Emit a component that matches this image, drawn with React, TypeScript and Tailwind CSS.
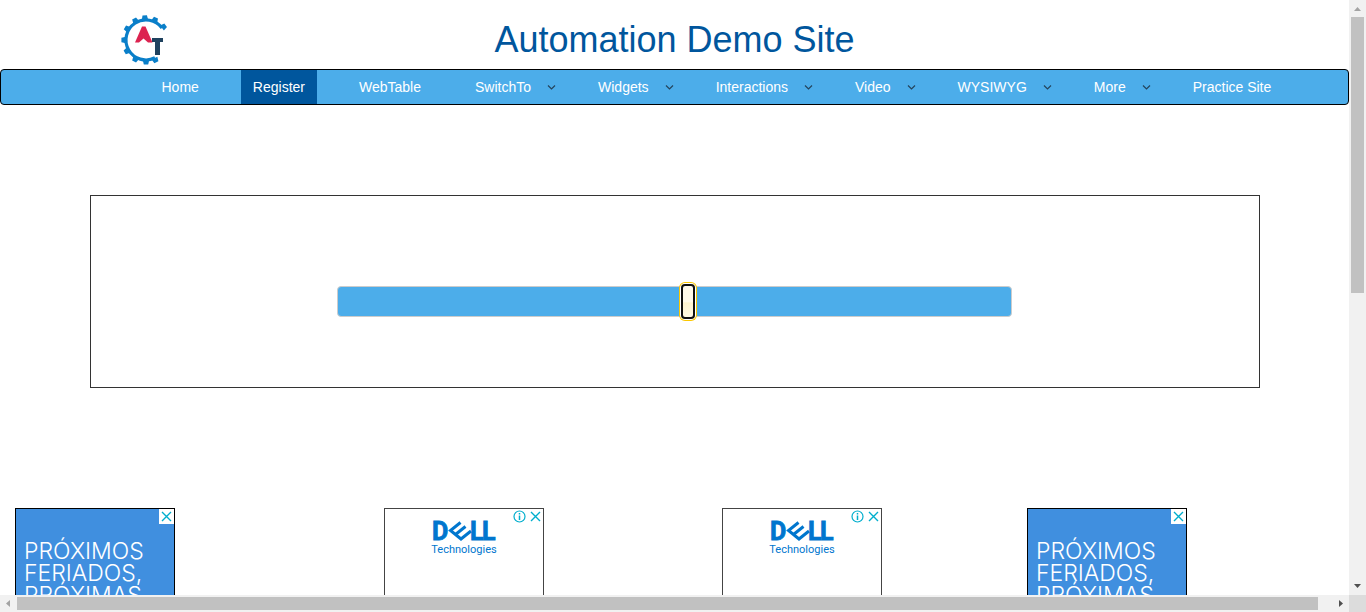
import { useState } from 'react';

const navItems = [
  { label: 'Home' },
  { label: 'Register', active: true },
  { label: 'WebTable' },
  { label: 'SwitchTo', menu: true },
  { label: 'Widgets', menu: true },
  { label: 'Interactions', menu: true },
  { label: 'Video', menu: true },
  { label: 'WYSIWYG', menu: true },
  { label: 'More', menu: true },
  { label: 'Practice Site' },
];

const toothAngles = [65, 90, 119, 150, 180, 211, 241, 267, 294, 323];

function Logo() {
  return (
    <svg viewBox="0 0 50 52" className="h-[52px] w-[50px]" role="img" aria-label="Automation Testing">
      <path d="M42 14A20 20 0 1 0 35 43.800" fill="none" stroke="#0a7fc9" strokeWidth="3.200" />
      {toothAngles.map((a) => (
        <path
          key={a}
          d="M20 -3.200L24.600 -2.200V2.200L20 3.200Z"
          fill="#0a7fc9"
          transform={`translate(26 26) rotate(${a})`}
        />
      ))}
      <path d="M22 12.500H25.500L32.500 28.500H28L23.500 24.500L19 28.500H15Z" fill="#dc2350" />
      <path d="M32 24H43V28H40V41H35V28H32Z" fill="#1f425f" />
    </svg>
  );
}

function Chevron() {
  return (
    <svg viewBox="0 0 9 6" className="ml-4 h-[6px] w-[9px]" fill="none" stroke="#24445c" strokeWidth="1.2" aria-hidden="true">
      <path d="M1 1.500L4.500 5L8 1.500" />
    </svg>
  );
}

function CloseIcon() {
  return (
    <svg viewBox="0 0 15 15" className="size-[15px]" fill="none" stroke="#00aecd" strokeWidth="1.400" aria-hidden="true">
      <path d="M3 3L12 12M12 3L3 12" />
    </svg>
  );
}

function HolidayAd() {
  return (
    <section className="h-[160px] w-[160px] shrink-0 border border-black bg-[#408fdf]">
      <div className="flex justify-end">
        <button aria-label="Close ad" className="bg-white"><CloseIcon /></button>
      </div>
      <p className="mt-4 pl-2 font-['Inter',sans-serif] text-[23px] leading-[22px] font-light text-white">
        PRÓXIMOS<br />FERIADOS,<br />PRÓXIMAS
      </p>
    </section>
  );
}

function DellAd() {
  return (
    <section className="relative h-[160px] w-[160px] shrink-0 border border-[#444] bg-white">
      <div className="absolute top-0 right-0 flex">
        <button aria-label="Ad information">
          <svg viewBox="0 0 16 15" className="h-[15px] w-[16px]" fill="none" stroke="#00aecd" aria-hidden="true">
            <circle cx="7.500" cy="7.500" r="5.500" strokeWidth="1.200" />
            <path d="M7.500 6.500V11M7.500 4V5.500" strokeWidth="1.500" />
          </svg>
        </button>
        <button aria-label="Close ad"><CloseIcon /></button>
      </div>
      <div className="flex flex-col items-center pt-3 text-[#0076ce]">
        <svg viewBox="0 0 62 22" className="h-[22px] w-[62px] overflow-visible" fill="#0076ce" fontFamily="Roboto, sans-serif" fontWeight="bold" fontSize="25" stroke="#0076ce" strokeWidth="0.800" role="img" aria-label="Dell">
          <text x="-1" y="19">D</text>
          <text x="37" y="19">L</text>
          <text x="49" y="19">L</text>
          <g fill="none">
            <path d="M17 10L27 2.500L37 10L28 18Z" fill="white" stroke="white" strokeWidth="2" />
            <path d="M27.500 1.500L17.500 9.500L28 18L38 10M22.500 13.500L32.500 5.500" strokeWidth="3" />
          </g>
        </svg>
        <span className="font-['Roboto',sans-serif] text-[11px] leading-[14px]">Technologies</span>
      </div>
    </section>
  );
}

export default function App() {
  const [value, setValue] = useState(52);
  return (
    <div className="grid h-screen grid-cols-[minmax(0,1fr)_17px] grid-rows-[minmax(0,1fr)_17px] bg-white font-['Liberation_Sans',Arial,sans-serif] text-sm">
      <main className="overflow-hidden">
        <header className="grid h-[69px] grid-cols-[1fr_auto_1fr] items-center">
          <div className="pt-2.5 pl-[120px]"><Logo /></div>
          <h1 className="pt-2.5 text-4xl text-[#00569d]">Automation Demo Site</h1>
        </header>
        <nav className="rounded border border-black bg-[#4cadea]">
          <ul className="mx-auto flex h-[34px] max-w-[1170px] gap-[30px] pl-[60px] whitespace-nowrap">
            {navItems.map((item) => (
              <li key={item.label} className="flex">
                <a
                  href="#"
                  className={
                    item.active
                      ? 'flex items-center bg-[#00569d] px-3 text-white'
                      : item.menu
                        ? 'flex items-center pl-3 text-white'
                        : 'flex items-center px-3 text-white'
                  }
                >
                  {item.label}
                  {item.menu && <Chevron />}
                </a>
              </li>
            ))}
          </ul>
        </nav>

        <div className="mx-auto mt-[90px] flex h-[193px] max-w-[1170px] items-center justify-center border border-[#333] pt-5">
          <input
            type="range"
            aria-label="Slider"
            value={value}
            onChange={(e) => setValue(Number(e.target.value))}
            className="block h-[31px] w-[675px] appearance-none rounded border border-[#ccc] bg-[#4cadea] outline-none [&::-webkit-slider-thumb]:h-[35px] [&::-webkit-slider-thumb]:w-[14px] [&::-webkit-slider-thumb]:appearance-none [&::-webkit-slider-thumb]:rounded-[4px] [&::-webkit-slider-thumb]:border-2 [&::-webkit-slider-thumb]:border-[#101010] [&::-webkit-slider-thumb]:bg-[linear-gradient(#fffaea_50%,#fdf3cf_55%,#fff9e4)] [&::-webkit-slider-thumb]:shadow-[0_0_0_1px_#fff,0_0_0_2px_#fbc700]"
          />
        </div>

        <footer className="mt-[120px] flex pl-[15px]">
          <HolidayAd />
          <div className="ml-[209px]"><DellAd /></div>
          <div className="ml-[178px]"><DellAd /></div>
          <div className="ml-[145px]"><HolidayAd /></div>
        </footer>
      </main>

      <div className="flex flex-col items-center bg-[#f1f1f1]" aria-hidden="true">
        <svg viewBox="0 0 17 17" className="size-[17px]" fill="#a3a3a3"><path d="M5 11L8.500 7L12 11Z" /></svg>
        <div className="h-[276px] w-[13px] bg-[#c1c1c1]" />
        <svg viewBox="0 0 17 17" className="mt-auto size-[17px]" fill="#505050"><path d="M5 6L8.500 10L12 6Z" /></svg>
      </div>
      <div className="flex items-center bg-[#f1f1f1]" aria-hidden="true">
        <svg viewBox="0 0 17 17" className="size-[17px]" fill="#a3a3a3"><path d="M10 5L6 8.500L10 12Z" /></svg>
        <div className="mr-[14px] h-[13px] flex-1 bg-[#c1c1c1]" />
        <svg viewBox="0 0 17 17" className="size-[17px]" fill="#505050"><path d="M7 5L11 8.500L7 12Z" /></svg>
      </div>
      <div className="bg-[#dcdcdc]" />
    </div>
  );
}
